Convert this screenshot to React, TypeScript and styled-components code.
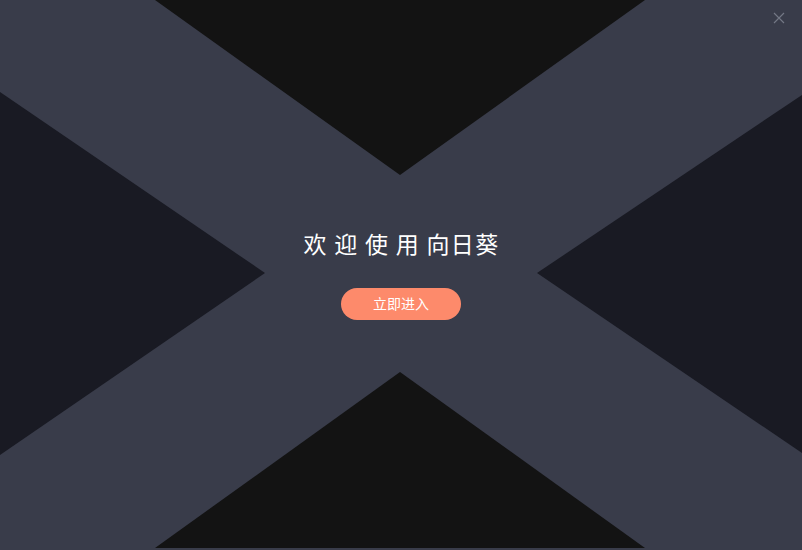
import React from "react";
import styled, { createGlobalStyle } from "styled-components";

const Global = createGlobalStyle`
  html, body { margin: 0; padding: 0; background: #393c4a; }
  body { font-family: "Noto Sans CJK SC", "Noto Sans", sans-serif; }
`;

const Screen = styled.div`
  position: relative;
  width: 802px;
  height: 550px;
  overflow: hidden;
  background: #393c4a;
  display: flex;
  flex-direction: column;
  align-items: center;
  padding-top: 227px;
  box-sizing: border-box;
`;

const Backdrop = styled.svg`
  position: absolute;
  left: 0;
  top: 0;
  width: 802px;
  height: 550px;
  z-index: 0;
`;

const Title = styled.h1`
  position: relative;
  z-index: 1;
  margin: 0;
  font-size: 23px;
  font-weight: 400;
  line-height: 32px;
  letter-spacing: 1.3px;
  color: #ffffff;
  padding-left: 1px;
  white-space: pre;
`;

const EnterButton = styled.button`
  position: relative;
  z-index: 1;
  margin-top: 29px;
  width: 120px;
  height: 32px;
  border: none;
  border-radius: 16px;
  background: #fd8a6b;
  color: #ffffff;
  font-family: "Noto Sans CJK SC", sans-serif;
  font-size: 14px;
  line-height: 20px;
  padding: 0 0 3px;
  cursor: pointer;
`;

const CloseButton = styled.button`
  position: absolute;
  z-index: 2;
  top: 11px;
  right: 16px;
  width: 14px;
  height: 14px;
  padding: 0;
  border: none;
  background: transparent;
  display: flex;
  align-items: center;
  justify-content: center;
  cursor: pointer;
`;

export default function App() {
  return (
    <>
      <Global />
      <Screen>
        <Backdrop viewBox="0 0 802 550" aria-hidden="true">
          <polygon points="155,0 645,0 400,175" fill="#131313" />
          <polygon points="155,548 645,548 400,372" fill="#131313" />
          <polygon points="0,92 265,273 0,455" fill="#191a23" />
          <polygon points="802,95 537,273 802,453" fill="#191a23" />
        </Backdrop>
        <CloseButton aria-label="关闭">
          <svg width="12" height="12" viewBox="0 0 12 12">
            <path d="M1 1 L11 11 M11 1 L1 11" stroke="#737785" strokeWidth="1.2" fill="none" />
          </svg>
        </CloseButton>
        <Title>{"欢 迎 使 用 向日葵"}</Title>
        <EnterButton>立即进入</EnterButton>
      </Screen>
    </>
  );
}
